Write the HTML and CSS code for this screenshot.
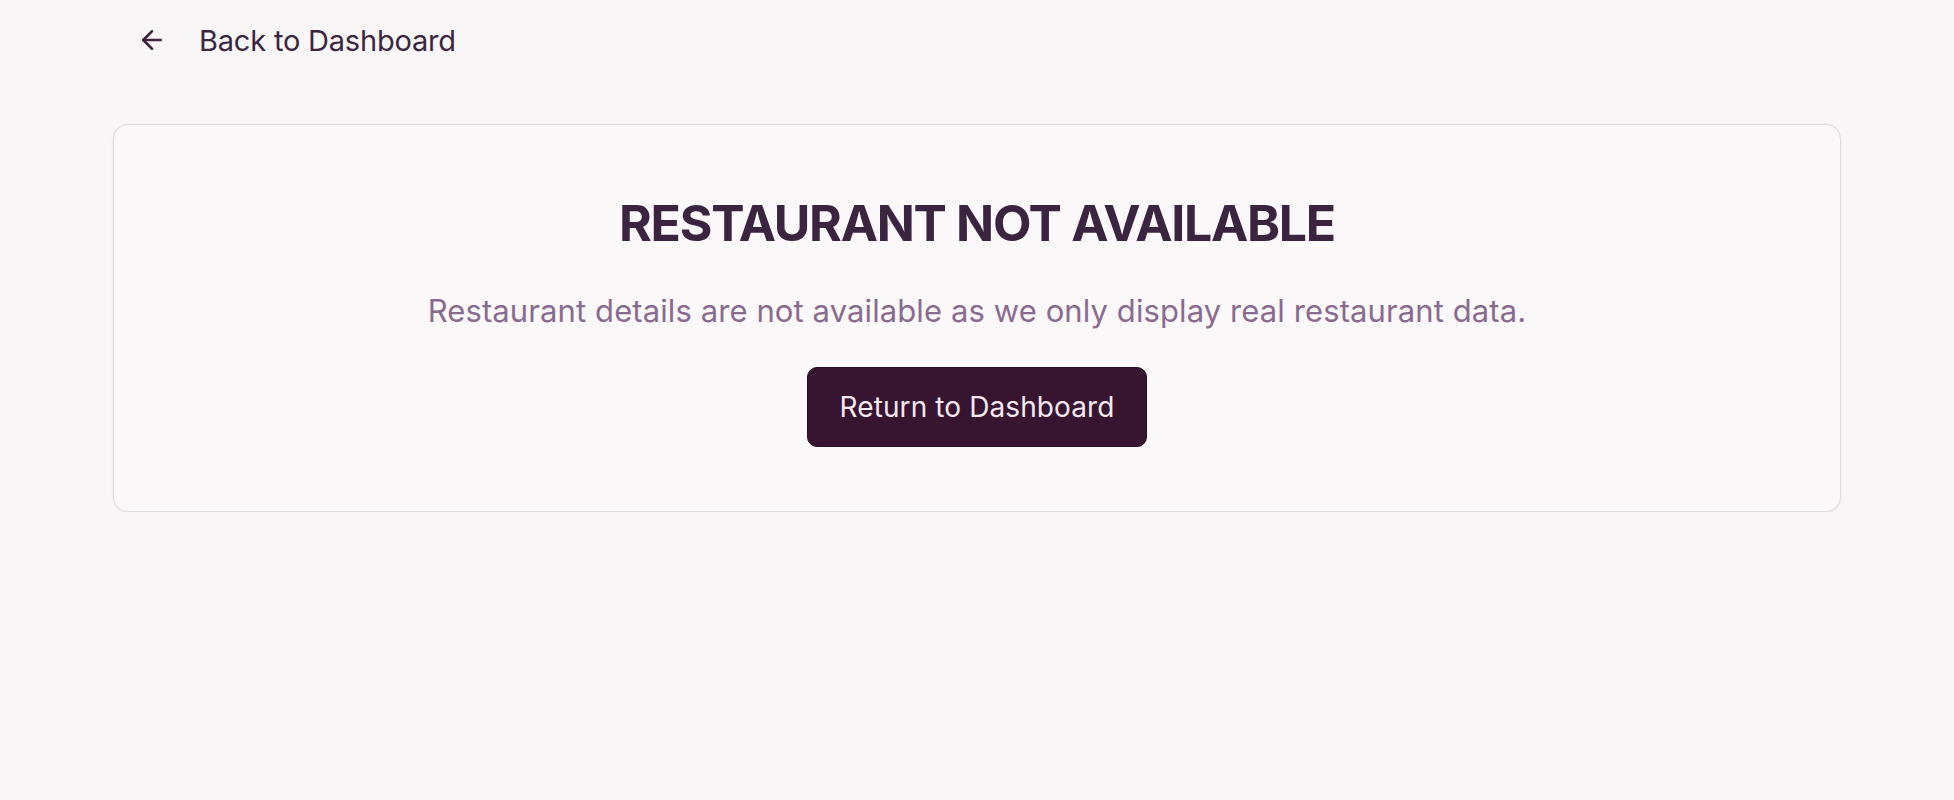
FILE: index.html
```html
<!DOCTYPE html>
<html lang="en">
<head>
<meta charset="utf-8">
<title>Restaurant not available</title>
<link rel="stylesheet" href="styles.css">
</head>
<body>
<div class="page">
  <div class="topbar">
    <a class="back-link" href="#">
      <svg class="back-icon" viewBox="0 0 24 24" width="30" height="30" fill="none" stroke="currentColor" stroke-width="2" stroke-linecap="round" stroke-linejoin="round"><path d="M19 12H5"/><path d="M12 19l-7-7 7-7"/></svg>
      <span>Back to Dashboard</span>
    </a>
  </div>
  <div class="card">
    <h1 class="title">RESTAURANT NOT AVAILABLE</h1>
    <p class="subtitle">Restaurant details are not available as we only display real restaurant data.</p>
    <button class="primary-btn">Return to Dashboard</button>
  </div>
</div>
</body>
</html>
```
FILE: styles.css
```css
html, body {
  margin: 0;
  padding: 0;
  background: #f8f6f7;
}
body {
  font-family: Inter, "Noto Sans", sans-serif;
  color: #3a2440;
}
.page {
  padding: 0 113px;
}
.topbar {
  height: 80px;
  display: flex;
  align-items: center;
}
.back-link {
  display: flex;
  align-items: center;
  gap: 32px;
  padding-left: 24px;
  color: #3b2640;
  text-decoration: none;
  font-size: 29px;
  letter-spacing: -0.2px;
}
.back-icon {
  display: block;
}
.card {
  margin-top: 44px;
  background: #faf8f9;
  border: 1.5px solid #e3dadd;
  border-radius: 15px;
  box-shadow: 0 1px 3px rgba(60, 30, 50, 0.07);
  display: flex;
  flex-direction: column;
  align-items: center;
  padding: 68px 40px 64px;
}
.title {
  margin: 0;
  font-size: 50px;
  line-height: 60px;
  font-weight: 700;
  letter-spacing: -1.3px;
  color: #3a2440;
}
.subtitle {
  margin: 38px 0 0;
  font-size: 31px;
  line-height: 40px;
  color: #8a6b8f;
  letter-spacing: 0.1px;
}
.primary-btn {
  margin-top: 36px;
  width: 340px;
  height: 80px;
  border: 1px solid #2a0f24;
  border-radius: 10px;
  background: #371530;
  color: #f6e9f1;
  font-family: Inter, "Noto Sans", sans-serif;
  font-size: 28px;
  letter-spacing: 0.1px;
  cursor: pointer;
}
```
